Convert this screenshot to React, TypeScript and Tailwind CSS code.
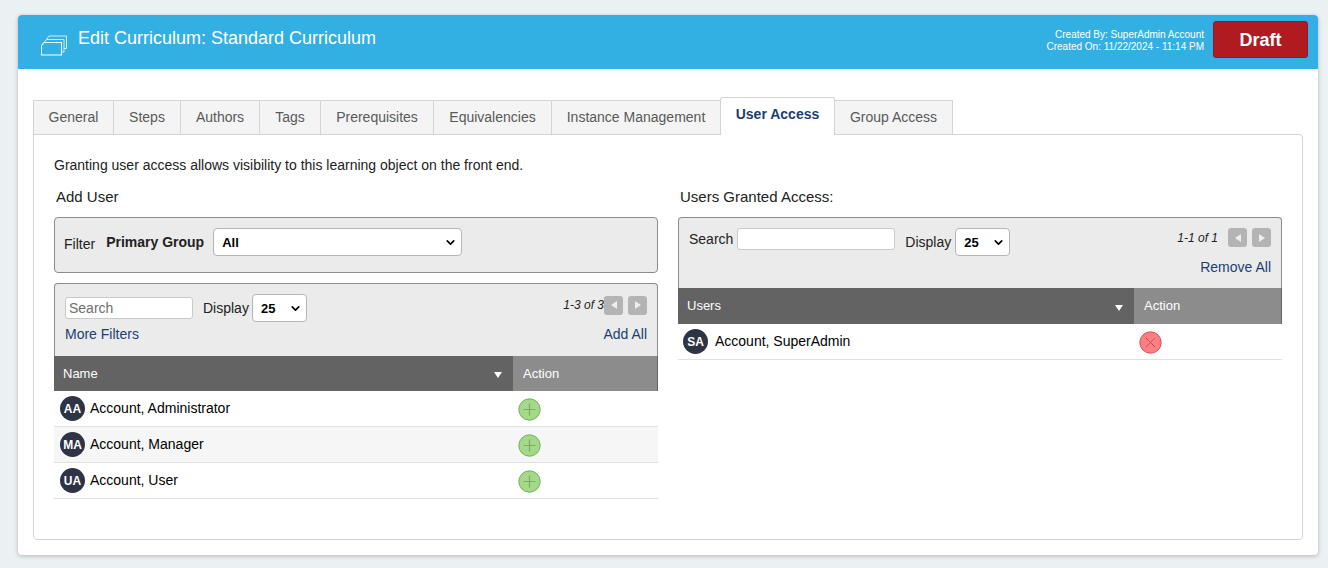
import { ChevronDown } from 'lucide-react';

const tabs = [
  { label: 'General', width: 'w-[81px]' },
  { label: 'Steps', width: 'w-[68px]' },
  { label: 'Authors', width: 'w-[80px]' },
  { label: 'Tags', width: 'w-[62px]' },
  { label: 'Prerequisites', width: 'w-[114px]' },
  { label: 'Equivalencies', width: 'w-[119px]' },
  { label: 'Instance Management', width: 'w-[170px]' },
  { label: 'User Access', width: 'w-[115px]', active: true },
  { label: 'Group Access', width: 'w-[119px]' },
];

const users = [
  { initials: 'AA', name: 'Account, Administrator' },
  { initials: 'MA', name: 'Account, Manager' },
  { initials: 'UA', name: 'Account, User' },
];

const StackIcon = () => (
  <svg width="26" height="21" viewBox="0 0 26 21" fill="none" stroke="white" strokeWidth="0.9" strokeLinejoin="round">
    <path d="M0.5 10.5 L3 7.5 H20.5 V20 H0.5 Z" strokeWidth="1.1" />
    <path d="M3 7.5 L5.5 4.5 H23 V17 H20.5" opacity="0.85" />
    <path d="M5.5 4.5 L8 1 H25.5 V13.5 H23" opacity="0.85" />
  </svg>
);

const Select = ({ width, value }: { width: string; value: string }) => (
  <div className={`${width} h-[28px] flex items-center justify-between bg-white border border-[#b5b5b5] rounded-[4px] pl-[8px] pr-[4px] text-[13px] font-bold text-black`}>
    <span className="pt-[1px]">{value}</span>
    <ChevronDown size={13} strokeWidth={3} />
  </div>
);

const PageButton = ({ dir }: { dir: 'left' | 'right' }) => (
  <div className="w-[19px] h-[19px] bg-[#b4b4b4] rounded-[3px] flex items-center justify-center">
    {dir === 'left' ? (
      <div className="w-0 h-0 border-y-[4px] border-y-transparent border-r-[6px] border-r-[#eeeeee]" />
    ) : (
      <div className="w-0 h-0 border-y-[4px] border-y-transparent border-l-[6px] border-l-[#eeeeee]" />
    )}
  </div>
);

const Avatar = ({ initials }: { initials: string }) => (
  <div className="w-[25px] h-[25px] rounded-full bg-[#2f3445] text-white text-[12px] font-bold flex items-center justify-center shrink-0">
    {initials}
  </div>
);

const AddButton = () => (
  <svg width="23" height="23" viewBox="0 0 23 23">
    <circle cx="11.5" cy="11.5" r="10.7" fill="#a5d88a" stroke="#72b25a" strokeWidth="1" />
    <path d="M11.5 5.5 V17.5 M5.5 11.5 H17.5" stroke="#74b15a" strokeWidth="1.2" />
  </svg>
);

const RemoveButton = () => (
  <svg width="23" height="23" viewBox="0 0 23 23">
    <circle cx="11.5" cy="11.5" r="10.7" fill="#fb7f84" stroke="#d9505a" strokeWidth="1" />
    <path d="M7 7 L16 16 M16 7 L7 16" stroke="#cf4b55" strokeWidth="1" />
  </svg>
);

const TableHead = ({ label, height, actionWidth }: { label: string; height: string; actionWidth: string }) => (
  <div className={`${height} flex text-white text-[13px]`}>
    <div className="flex-1 bg-[#636363] flex items-center justify-between pl-[9px] pr-[11px]">
      <span>{label}</span>
      <div className="w-0 h-0 mt-[3px] border-x-[4px] border-x-transparent border-t-[6px] border-t-white" />
    </div>
    <div className={`${actionWidth} pl-[10px] bg-[#8c8c8c] flex items-center border-r border-[#666]`}>Action</div>
  </div>
);

const App = () => {
  return (
    <div className="w-[1328px] h-[568px] overflow-hidden bg-[#ebf0f3] pt-[15px] px-[18px] font-['Liberation_Sans',Arial,sans-serif] text-[14px] text-[#222]">
      <div className="w-[1300px] h-[540px] bg-white rounded-[4px] shadow-[0_1px_4px_rgba(0,0,0,0.25)] overflow-hidden">
        {/* Header */}
        <div className="h-[54px] bg-[#33b0e3] flex items-center justify-between pl-[23px] pr-[10px] text-white">
          <div className="flex items-center gap-[11px]">
            <div className="mt-[6px]">
              <StackIcon />
            </div>
            <h1 className="text-[18px] leading-[22px] mb-[9px]">Edit Curriculum: Standard Curriculum</h1>
          </div>
          <div className="flex items-center gap-[9px]">
            <div className="text-[10px] leading-[12px] text-right mb-[2px]">
              <div>Created By: SuperAdmin Account</div>
              <div>Created On: 11/22/2024 - 11:14 PM</div>
            </div>
            <div className="w-[95px] h-[37px] mb-[5px] bg-[#b01a21] border border-[#991820] rounded-[3px] flex items-center justify-center pt-[1px] text-[18px] font-bold">
              Draft
            </div>
          </div>
        </div>

        <div className="px-[15px] pt-[28px]">
          {/* Tabs */}
          <div className="flex items-end h-[38px] relative z-10 text-[14px]">
            {tabs.map((tab) =>
              tab.active ? (
                <div
                  key={tab.label}
                  className={`${tab.width} h-[38px] -ml-px bg-white border border-[#d4d4d4] border-b-0 rounded-t-[3px] flex items-center justify-center pb-[4px] font-bold text-[#1a3f70] text-[14px]`}
                >
                  {tab.label}
                </div>
              ) : (
                <div
                  key={tab.label}
                  className={`${tab.width} h-[35px] -ml-px first:ml-0 bg-[#f4f4f4] border border-[#d4d4d4] flex items-center justify-center text-[#595959]`}
                >
                  {tab.label}
                </div>
              )
            )}
          </div>

          {/* Panel */}
          <div className="h-[406px] -mt-px border border-[#d4d4d4] rounded-[4px] rounded-tl-none px-[20px]">
            <p className="mt-[22px] leading-[16px] text-[14px] text-[#222]">
              Granting user access allows visibility to this learning object on the front end.
            </p>
            <div className="mt-[15px] grid grid-cols-[604px_604px] gap-x-[20px]">
              {/* Add user */}
              <div>
                <h2 className="pl-[2px] h-[17px] leading-[17px] text-[15px] text-[#222]">Add User</h2>
                <div className="mt-[12px] h-[56px] bg-[#ebebeb] border border-[#8c8c8c] rounded-[4px] flex items-start pl-[9px] pt-[10px]">
                  <span className="mt-[8px] leading-[16px]">Filter</span>
                  <span className="mt-[6px] ml-[11px] leading-[17px] font-bold">Primary Group</span>
                  <Select width="w-[249px] ml-[9px]" value="All" />
                </div>

                <div className="mt-[10px] border-x border-t border-[#8c8c8c] rounded-t-[4px] bg-[#ebebeb] h-[73px] px-[10px] pt-[10px]">
                  <div className="flex items-center">
                    <div className="w-[128px] h-[22px] bg-white border border-[#c9c9c9] rounded-[3px] pl-[3px] flex items-center text-[#6f6f6f]">
                      Search
                    </div>
                    <span className="ml-[10px] mr-[3px]">Display</span>
                    <Select width="w-[55px]" value="25" />
                    <div className="ml-auto flex items-center mb-[6px]">
                      <span className="text-[12px] italic text-[#222]">1-3 of 3</span>
                      <div className="flex gap-[5px]">
                        <PageButton dir="left" />
                        <PageButton dir="right" />
                      </div>
                    </div>
                  </div>
                  <div className="flex justify-between mt-[4px] leading-[16px] text-[#1a3f70]">
                    <span>More Filters</span>
                    <span>Add All</span>
                  </div>
                </div>
                <TableHead label="Name" height="h-[35px]" actionWidth="w-[145px]" />
                {users.map((user, index) => (
                  <div
                    key={user.initials}
                    className={`h-[36px] flex items-center border-b border-[#e0e0e0] ${index === 1 ? 'bg-[#f6f6f6]' : 'bg-white'}`}
                  >
                    <div className="flex-1 flex items-center gap-[5px] pl-[6px] text-black">
                      <Avatar initials={user.initials} />
                      <span>{user.name}</span>
                    </div>
                    <div className="w-[145px] pl-[5px] pt-[1px]">
                      <AddButton />
                    </div>
                  </div>
                ))}
              </div>

              {/* Granted */}
              <div>
                <h2 className="pl-[2px] h-[17px] leading-[17px] text-[15px] text-[#222]">Users Granted Access:</h2>
                <div className="mt-[12px] border-x border-t border-[#8c8c8c] rounded-t-[4px] bg-[#ebebeb] h-[71px] px-[10px] pt-[10px]">
                  <div className="flex items-start">
                    <span className="leading-[22px]">Search</span>
                    <div className="ml-[4px] w-[158px] h-[22px] bg-white border border-[#c9c9c9] rounded-[3px]" />
                    <span className="ml-[10px] mr-[4px] mt-[6px] leading-[16px]">Display</span>
                    <Select width="w-[55px]" value="25" />
                    <div className="ml-auto flex items-center gap-[10px]">
                      <span className="text-[12px] italic text-[#222]">1-1 of 1</span>
                      <div className="flex gap-[5px]">
                        <PageButton dir="left" />
                        <PageButton dir="right" />
                      </div>
                    </div>
                  </div>
                  <div className="text-right mt-[3px] leading-[16px] text-[#1a3f70]">Remove All</div>
                </div>
                <TableHead label="Users" height="h-[36px] pt-[0px] leading-[38px]" actionWidth="w-[148px]" />
                <div className="h-[36px] flex items-center border-b border-[#e0e0e0]">
                  <div className="flex-1 flex items-center gap-[7px] pl-[5px] text-black">
                    <Avatar initials="SA" />
                    <span className="mb-[1px]">Account, SuperAdmin</span>
                  </div>
                  <div className="w-[148px] pl-[5px] pt-[1px]">
                    <RemoveButton />
                  </div>
                </div>
              </div>
            </div>
          </div>
        </div>
      </div>
    </div>
  );
};

export default App;
